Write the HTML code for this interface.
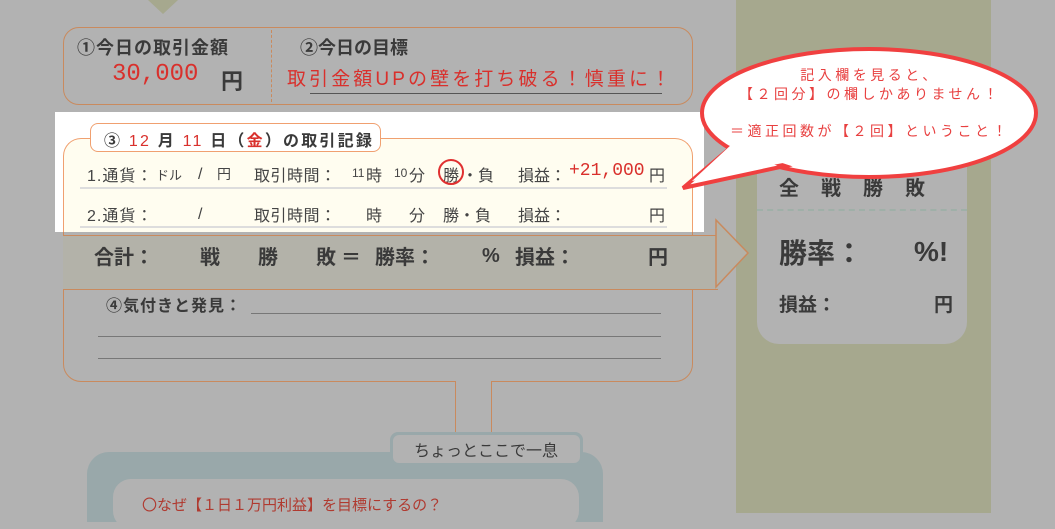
<!DOCTYPE html>
<html><head><meta charset="utf-8"><style>
*{margin:0;padding:0;box-sizing:border-box}
body{width:1055px;height:513px;overflow:hidden;background:#b2b2b2;position:relative;font-family:"Liberation Sans","Noto Sans CJK JP",sans-serif;color:#3a3a3a}
.a{position:absolute;white-space:nowrap}
.r{color:#d9302c}
.b{font-weight:bold}
.t{font-size:16px;color:#444;top:162px}
.u{font-size:16px;color:#444;top:202px}
.s{font-size:20px;font-weight:bold;top:241px}
</style></head><body>
<!-- olive column -->
<div class="a" style="left:736px;top:0;width:255px;height:513px;background:#a6a88e"></div>
<div class="a" style="left:757px;top:110px;width:210px;height:234px;background:#b2b2b2;border-radius:0 0 22px 22px"></div>
<div class="a" style="left:757px;top:209px;width:210px;border-top:2px dashed #9fb0a8"></div>
<div class="a b" style="left:779px;top:172px;font-size:20px;letter-spacing:22px">全戦勝敗</div>
<div class="a b" style="left:779px;top:232px;font-size:28px">勝率：</div>
<div class="a b" style="left:914px;top:236px;font-size:28px">%!</div>
<div class="a b" style="left:779px;top:290px;font-size:19px">損益：</div>
<div class="a b" style="left:934px;top:290px;font-size:19px">円</div>
<!-- top triangle -->
<div class="a" style="left:148px;top:0;width:0;height:0;border-left:15px solid transparent;border-right:15px solid transparent;border-top:14px solid #a6a88e"></div>
<!-- box 1/2 -->
<div class="a" style="left:63px;top:27px;width:630px;height:78px;border:1.5px solid #c98a5e;border-radius:16px"></div>
<div class="a" style="left:271px;top:30px;height:72px;border-left:1.5px dashed #c98a5e"></div>
<div class="a b" style="left:77px;top:34px;font-size:18px;letter-spacing:1px">①今日の取引金額</div>
<div class="a r" style="left:112px;top:61px;font-size:24px;font-family:'Liberation Mono',monospace">30,000</div>
<div class="a b" style="left:221px;top:64px;font-size:22px">円</div>
<div class="a b" style="left:300px;top:34px;font-size:18px">②今日の目標</div>
<div class="a r" style="left:287px;top:64px;font-size:19px;letter-spacing:3.1px">取引金額UPの壁を打ち破る！慎重に！</div>
<div class="a" style="left:310px;top:93px;width:352px;border-top:1px solid #555"></div>
<!-- lower box -->
<div class="a" style="left:63px;top:138px;width:630px;height:244px;border:1.5px solid #c98a5e;border-radius:18px"></div>
<div class="a" style="left:63px;top:235px;width:655px;height:55px;background:#b3b2a9;border-top:1.5px solid #c98a5e;border-bottom:1.5px solid #c98a5e"></div>
<svg class="a" style="left:700px;top:215px" width="52" height="95"><polygon points="16,20 16,5 48,38 16,72 16,57" fill="#b3b2a9" stroke="#c98a5e" stroke-width="1.5"/></svg>
<div class="a s" style="left:94px">合計：</div>
<div class="a s" style="left:200px">戦</div>
<div class="a s" style="left:258px">勝</div>
<div class="a s" style="left:316px">敗</div>
<div class="a s" style="left:341px">＝</div>
<div class="a s" style="left:375px">勝率：</div>
<div class="a s" style="left:482px;top:245px">%</div>
<div class="a s" style="left:515px">損益：</div>
<div class="a s" style="left:648px">円</div>
<div class="a b" style="left:106px;top:292px;font-size:16px;letter-spacing:1px">④気付きと発見：</div>
<div class="a" style="left:251px;top:313px;width:410px;border-top:1px solid #777"></div>
<div class="a" style="left:98px;top:336px;width:563px;border-top:1px solid #777"></div>
<div class="a" style="left:98px;top:358px;width:563px;border-top:1px solid #777"></div>
<!-- connector -->
<div class="a" style="left:455px;top:381px;width:37px;height:52px;background:#b2b2b2;border-left:1.5px solid #c98a5e;border-right:1.5px solid #c98a5e"></div>
<!-- bottom teal -->
<div class="a" style="left:87px;top:452px;width:516px;height:70px;background:#99a8aa;border-radius:22px 22px 0 0"></div>
<div class="a" style="left:390px;top:432px;width:193px;height:34px;background:#99a8aa;border-radius:8px"></div>
<div class="a" style="left:393px;top:435px;width:187px;height:28px;background:#b2b2b2;border-radius:6px"></div>
<div class="a" style="left:414px;top:437px;font-size:16px">ちょっとここで一息</div>
<div class="a" style="left:113px;top:479px;width:466px;height:50px;background:#b2b2b2;border-radius:18px"></div>
<div class="a" style="left:142px;top:494px;font-size:15px;color:#b03a30">〇なぜ【１日１万円利益】を目標にするの？</div>
<!-- highlight -->
<div class="a" style="left:55px;top:112px;width:649px;height:120px;background:#fff"></div>
<div class="a" style="left:63px;top:138px;width:630px;height:94px;background:#fffdf0;border:1.5px solid #f0a070;border-bottom:none;border-radius:18px 18px 0 0"></div>
<div class="a" style="left:90px;top:123px;width:291px;height:29px;background:#fff;border:1.5px solid #f0a070;border-radius:8px"></div>
<div class="a b" style="left:104px;top:127px;font-size:16px;letter-spacing:2.2px">③ <span class="r" style="font-weight:normal">12</span> 月 <span class="r" style="font-weight:normal">11</span> 日（<span class="r">金</span>）の取引記録</div>
<div class="a t" style="left:87px;letter-spacing:1px">1.通貨：</div>
<div class="a t r" style="left:156px;font-size:13px;top:165px">ドル</div>
<div class="a t" style="left:198px;top:166px">/</div>
<div class="a t r" style="left:217px;font-size:14px;top:164px">円</div>
<div class="a t" style="left:254px;letter-spacing:0.5px">取引時間：</div>
<div class="a t r" style="left:352px;font-size:12px;top:166px">11</div>
<div class="a t" style="left:366px">時</div>
<div class="a t r" style="left:394px;font-size:12px;top:166px">10</div>
<div class="a t" style="left:409px">分</div>
<div class="a t" style="left:443px">勝</div>
<div class="a t" style="left:462px">・負</div>
<div class="a t" style="left:518px">損益：</div>
<div class="a r" style="left:569px;top:161px;font-size:18px;font-family:'Liberation Mono',monospace">+21,000</div>
<div class="a t" style="left:649px">円</div>
<div class="a" style="left:438px;top:159px;width:26px;height:26px;border:2px solid #e03030;border-radius:50%"></div>
<div class="a" style="left:80px;top:187px;width:587px;border-top:2px solid #ddd"></div>
<div class="a u" style="left:87px;letter-spacing:1px">2.通貨：</div>
<div class="a u" style="left:198px;top:206px">/</div>
<div class="a u" style="left:254px;letter-spacing:0.5px">取引時間：</div>
<div class="a u" style="left:366px">時</div>
<div class="a u" style="left:409px">分</div>
<div class="a u" style="left:443px">勝・負</div>
<div class="a u" style="left:518px">損益：</div>
<div class="a u" style="left:649px">円</div>
<div class="a" style="left:80px;top:226px;width:587px;border-top:2px solid #ddd"></div>
<!-- speech bubble -->
<svg class="a" style="left:670px;top:40px" width="385" height="160">
<ellipse cx="199" cy="73" rx="167" ry="64" fill="#fff" stroke="#f04040" stroke-width="4"/>
<polygon points="60,108 13,148 115,126" fill="#fff" stroke="#f04040" stroke-width="4" stroke-linejoin="miter"/>
<polygon points="62,104 22,141 118,122 110,110" fill="#fff"/>
</svg>
<div class="a" style="left:690px;top:66px;width:360px;text-align:center;font-size:14px;color:#e84040;line-height:19px;letter-spacing:3.5px">記入欄を見ると、<br>【２回分】の欄しかありません！</div>
<div class="a" style="left:690px;top:121px;width:360px;text-align:center;font-size:14px;color:#e84040;letter-spacing:3.5px">＝適正回数が【２回】ということ！</div>
</body></html>
